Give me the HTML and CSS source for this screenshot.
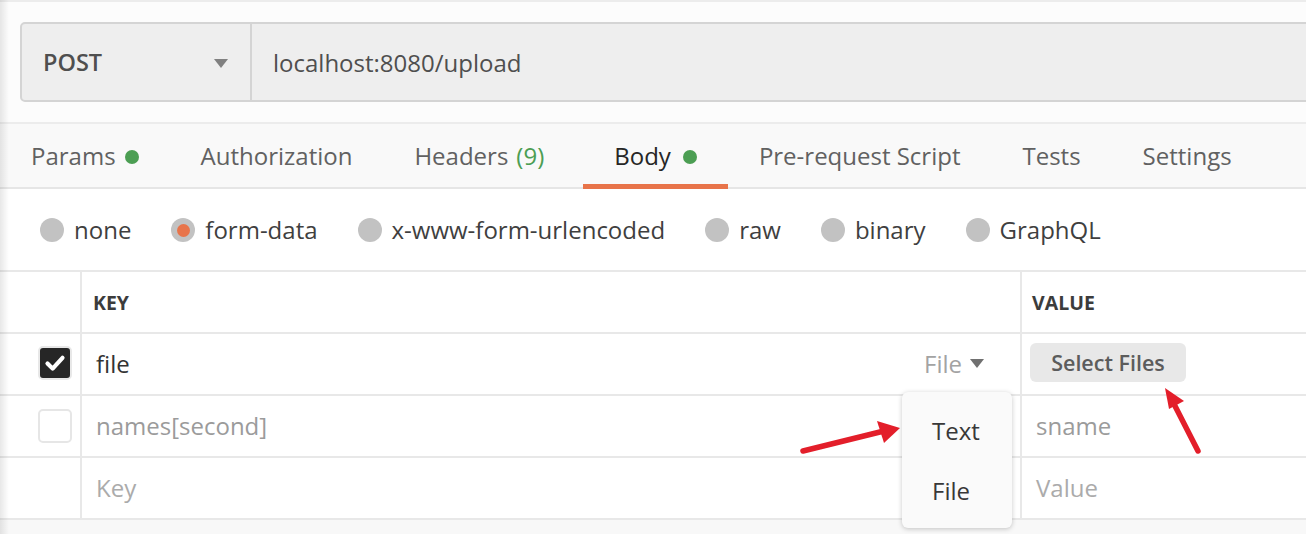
FILE: index.html
```html
<!DOCTYPE html>
<html lang="en">
<head>
<meta charset="utf-8">
<title>Postman request</title>
<link rel="stylesheet" href="styles.css">
</head>
<body>
<div class="app">
  <div class="top">
    <div class="urlbar">
      <div class="method"><span class="method-name">POST</span><span class="caret"></span></div>
      <div class="url">localhost:8080/upload</div>
    </div>
  </div>
  <nav class="tabs">
    <div class="tab">Params<span class="dot"></span></div>
    <div class="tab">Authorization</div>
    <div class="tab tab-headers">Headers<span class="count">(9)</span></div>
    <div class="tab active">Body<span class="dot dot-body"></span></div>
    <div class="tab">Pre-request Script</div>
    <div class="tab">Tests</div>
    <div class="tab">Settings</div>
  </nav>
  <div class="radios">
    <label class="radio"><span class="circle"></span>none</label>
    <label class="radio"><span class="circle on"></span>form-data</label>
    <label class="radio"><span class="circle"></span>x-www-form-urlencoded</label>
    <label class="radio"><span class="circle"></span>raw</label>
    <label class="radio"><span class="circle"></span>binary</label>
    <label class="radio"><span class="circle"></span>GraphQL</label>
  </div>
  <div class="table">
    <div class="cell c1 head"></div>
    <div class="cell c2 head"><span class="th">KEY</span></div>
    <div class="cell c3 head"><span class="th th-v">VALUE</span></div>

    <div class="cell c1"><span class="check checked"><svg viewBox="0 0 32 32" width="32" height="32"><path d="M8 16.5 L13.5 22 L24 10.5" fill="none" stroke="#fff" stroke-width="4.5" stroke-linecap="round" stroke-linejoin="round"/></svg></span></div>
    <div class="cell c2 keycell"><span class="val">file</span><span class="type">File<span class="caret small"></span></span></div>
    <div class="cell c3"><button class="select">Select Files</button></div>

    <div class="cell c1"><span class="check"></span></div>
    <div class="cell c2"><span class="val muted">names[second]</span></div>
    <div class="cell c3"><span class="val muted vpad">sname</span></div>

    <div class="cell c1"></div>
    <div class="cell c2"><span class="val ph">Key</span></div>
    <div class="cell c3"><span class="val ph vpad">Value</span></div>
  </div>
  <div class="foot"></div>

  <div class="menu">
    <div class="menu-item">Text</div>
    <div class="menu-item">File</div>
  </div>

  <svg class="arrows" width="1306" height="534" viewBox="0 0 1306 534">
    <line x1="803" y1="451" x2="884" y2="431" stroke="#e31e2a" stroke-width="5.5" stroke-linecap="round"/>
    <polygon points="900,428 877,421 884,443" fill="#e31e2a"/>
    <line x1="1198" y1="451" x2="1174" y2="404" stroke="#e31e2a" stroke-width="5.5" stroke-linecap="round"/>
    <polygon points="1165,388 1184,401 1169,409" fill="#e31e2a"/>
  </svg>
</div>
</body>
</html>
```
FILE: styles.css
```css
* { box-sizing: border-box; }
html, body { margin: 0; padding: 0; }
body {
  width: 1306px;
  height: 534px;
  overflow: hidden;
  background: #f8f8f8;
  font-family: "Open Sans", "Liberation Sans", sans-serif;
  color: #3c3c3c;
}
.app {
  position: relative;
  width: 1306px;
  height: 534px;
  overflow: hidden;
}
.app::before {
  content: "";
  position: absolute;
  left: 0; top: 0; bottom: 0;
  width: 9px;
  background: linear-gradient(to right, rgba(0,0,0,0.09), rgba(0,0,0,0));
  z-index: 5;
  pointer-events: none;
}
.top {
  background: #fcfcfc;
  border-top: 2px solid #ececec;
  padding: 20px 0 20px 20px;
}
.urlbar {
  display: flex;
  height: 80px;
  margin-right: -20px;
  border: 2px solid #d4d4d4;
  border-radius: 5px;
  background: #eeeeee;
  font-size: 24px;
  color: #4f4f4f;
}
.method {
  width: 230px;
  display: flex;
  align-items: center;
  justify-content: space-between;
  padding: 0 22px 0 21px;
  border-right: 2px solid #d4d4d4;
}
.method-name { font-weight: 600; font-size: 23.5px; }
.caret {
  width: 0; height: 0;
  border-left: 7px solid transparent;
  border-right: 7px solid transparent;
  border-top: 9px solid #808080;
  margin-top: 2px;
}
.caret.small {
  display: inline-block;
  margin-left: 8px;
  border-left-width: 7.5px;
  border-right-width: 7.5px;
  border-top-width: 9px;
  border-top-color: #707070;
}
.url { display: flex; align-items: center; padding-left: 21px; }

.tabs {
  display: flex;
  height: 67px;
  background: #f9f9f9;
  border-top: 2px solid #ececec;
  border-bottom: 2px solid #e6e6e6;
  font-size: 24px;
  color: #616161;
}
.tab {
  position: relative;
  display: flex;
  align-items: center;
  padding: 0 31px;
  white-space: nowrap;
}
.tab-headers { padding-right: 39px; }
.tab.active { color: #262626; }
.tab.active::after {
  content: "";
  position: absolute;
  left: 0; right: 0; bottom: -2px;
  height: 5px;
  background: #e8744a;
}
.dot {
  display: inline-block;
  width: 14px; height: 14px;
  border-radius: 50%;
  background: #4c9e53;
  margin-left: 9px;
  margin-top: 2px;
}
.dot-body { margin-left: 12px; }
.count { color: #4c9e53; margin-left: 8px; }

.radios {
  display: flex;
  align-items: center;
  gap: 40px;
  height: 81px;
  padding-left: 40px;
  background: #ffffff;
  font-size: 24px;
  color: #3f3f3f;
}
.radio { display: flex; align-items: center; gap: 10px; }
.circle {
  width: 24px; height: 24px;
  border-radius: 50%;
  background: #c2c2c2;
  display: flex;
  align-items: center;
  justify-content: center;
  margin-top: 1px;
}
.circle.on::after {
  content: "";
  width: 13px; height: 13px;
  border-radius: 50%;
  background: #e8744a;
}

.table {
  display: grid;
  grid-template-columns: 80px 940px 1fr;
  grid-auto-rows: 62px;
  background: #ffffff;
  border-top: 2px solid #e8e8e8;
}
.cell {
  display: flex;
  align-items: center;
  border-bottom: 2px solid #e8e8e8;
  font-size: 24px;
}
.c2, .c3 { border-left: 2px solid #e8e8e8; }
.c1 { padding-left: 38px; }
.c2 { padding-left: 14px; }
.c3 { padding-left: 8px; }
.th { font-size: 19.5px; font-weight: 700; color: #3c3c3c; margin-left: -3px; }
.th-v { margin-left: 2px; }
.keycell { justify-content: space-between; padding-right: 36px; }
.val { color: #333333; margin-top: -2px; }
.val.muted { color: #9b9b9b; }
.val.ph { color: #ababab; }
.vpad { margin-left: 6px; }
.type { color: #a3a3a3; display: inline-flex; align-items: center; margin-top: -2px; }
.type .caret.small { margin-top: 1px; }
.check {
  width: 34px; height: 34px;
  border-radius: 5px;
  border: 2px solid #e6e6e6;
  background: #ffffff;
  display: flex;
  align-items: center;
  justify-content: center;
}
.check.checked {
  background: #262626;
  border-color: #e8e8e8;
  margin-top: -3px;
}
.select {
  height: 39px;
  width: 156px;
  padding: 0;
  border: none;
  border-radius: 6px;
  background: #e8e8e8;
  font-family: "Open Sans", "Liberation Sans", sans-serif;
  font-size: 21.5px;
  font-weight: 600;
  color: #5c5c5c;
  margin-top: -3px;
}
.foot { height: 20px; background: #f8f8f8; }

.menu {
  position: absolute;
  left: 902px;
  top: 392px;
  width: 110px;
  height: 136px;
  background: #fafafa;
  border-radius: 6px;
  box-shadow: 0 1px 5px rgba(0,0,0,0.22);
  padding-top: 8px;
  z-index: 3;
}
.menu-item {
  height: 60px;
  display: flex;
  align-items: center;
  padding-left: 30px;
  font-size: 24px;
  color: #383838;
}
.arrows {
  position: absolute;
  left: 0; top: 0;
  z-index: 4;
  pointer-events: none;
}
```
